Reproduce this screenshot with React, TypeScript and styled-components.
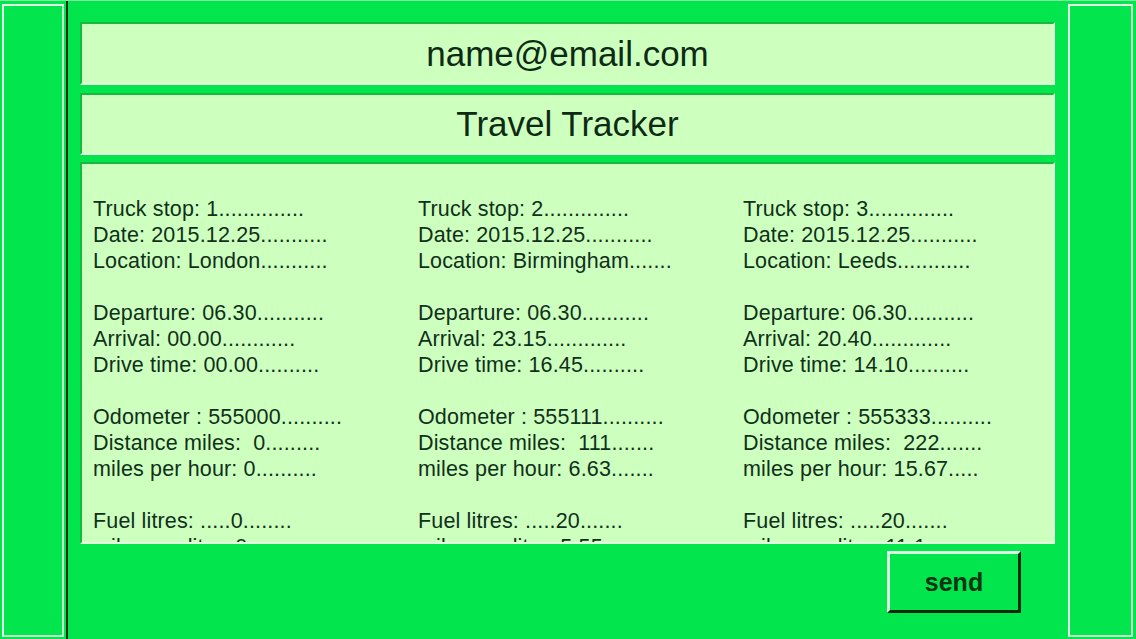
import { createGlobalStyle, styled } from 'styled-components';

const GlobalStyle = createGlobalStyle`
  html, body {
    margin: 0;
    padding: 0;
    background: #02e54c;
  }
  body {
    font-family: "Liberation Sans", Arial, sans-serif;
    color: #0f2a14;
  }
`;

type Stop = string[][];

const stops: Stop[] = [
  [
    ['Truck stop: 1..............', 'Date: 2015.12.25...........', 'Location: London...........'],
    ['Departure: 06.30...........', 'Arrival: 00.00............', 'Drive time: 00.00..........'],
    ['Odometer : 555000..........', 'Distance miles:  0.........', 'miles per hour: 0..........'],
    ['Fuel litres: .....0........', 'miles per litre: 0........'],
  ],
  [
    ['Truck stop: 2..............', 'Date: 2015.12.25...........', 'Location: Birmingham.......'],
    ['Departure: 06.30...........', 'Arrival: 23.15.............', 'Drive time: 16.45..........'],
    ['Odometer : 555111..........', 'Distance miles:  111.......', 'miles per hour: 6.63.......'],
    ['Fuel litres: .....20.......', 'miles per litre: 5.55......'],
  ],
  [
    ['Truck stop: 3..............', 'Date: 2015.12.25...........', 'Location: Leeds............'],
    ['Departure: 06.30...........', 'Arrival: 20.40.............', 'Drive time: 14.10..........'],
    ['Odometer : 555333..........', 'Distance miles:  222.......', 'miles per hour: 15.67.....'],
    ['Fuel litres: .....20.......', 'miles per litre: 11.1......'],
  ],
];

export default function App() {
  return (
    <>
      <GlobalStyle />
      <Screen>
        <SideBar $side="left">
          <SideFrame />
        </SideBar>
        <Main>
          <HeaderPanel $height={63}>name@email.com</HeaderPanel>
          <HeaderPanel $height={62}>Travel Tracker</HeaderPanel>
          <LogPanel>
            {stops.map((stop, i) => (
              <Column key={i}>
                {stop.map((group, j) => (
                  <Group key={j}>
                    {group.map((line, k) => (
                      <Line key={k}>{line}</Line>
                    ))}
                  </Group>
                ))}
              </Column>
            ))}
          </LogPanel>
          <Actions>
            <SendButton>send</SendButton>
          </Actions>
        </Main>
        <SideBar $side="right">
          <SideFrame />
        </SideBar>
      </Screen>
    </>
  );
}

const Screen = styled.div`
  display: flex;
  height: 639px;
  width: 1136px;
  overflow: hidden;
  border-top: 1px solid #7df29e;
  box-sizing: border-box;
`;

const SideBar = styled.div<{ $side: 'left' | 'right' }>`
  display: flex;
  flex-shrink: 0;
  box-sizing: border-box;
  width: 68px;
  padding: ${(p) => (p.$side === 'left' ? '3px 2px 2px 2px' : '3px 3px 2px 0')};
  border-right: ${(p) => (p.$side === 'left' ? '2px solid #0b2a10' : 'none')};
`;

const SideFrame = styled.div`
  flex: 1;
  border: 2px solid #e4ffe6;
  border-right-color: #bff5c8;
  border-bottom-color: #bff5c8;
`;

const Main = styled.div`
  flex: 1;
  min-width: 0;
  display: flex;
  flex-direction: column;
  padding: 21px 13px 0 12px;
  gap: 8px;
`;

const panelBorder = `
  box-sizing: border-box;
  background: #cdffbf;
  border: 2px solid #17b83f;
  border-right-color: #e6ffe0;
  border-bottom-color: #e6ffe0;
`;

const HeaderPanel = styled.div<{ $height: number }>`
  ${panelBorder}
  height: ${(p) => p.$height}px;
  display: flex;
  align-items: center;
  justify-content: center;
  font-size: 35px;
  color: #0f2a14;
`;

const LogPanel = styled.div`
  ${panelBorder}
  height: 382px;
  margin-top: -1px;
  display: grid;
  grid-template-columns: 325px 325px minmax(0, 1fr);
  padding: 32px 0 0 11px;
  overflow: hidden;
`;

const Column = styled.div`
  display: flex;
  flex-direction: column;
  gap: 26px;
  min-width: 0;
`;

const Group = styled.div`
  display: flex;
  flex-direction: column;
`;

const Line = styled.div`
  font-size: 21.5px;
  letter-spacing: 0.15px;
  line-height: 26px;
  white-space: pre;
  color: #10301a;
`;

const Actions = styled.div`
  display: flex;
  justify-content: flex-end;
  padding-right: 34px;
  margin-top: -1px;
`;

const SendButton = styled.button`
  width: 134px;
  height: 62px;
  box-sizing: border-box;
  background: #02e54c;
  border: 3px solid #d8ffe0;
  border-right-color: #0b2a10;
  border-bottom-color: #0b2a10;
  font-family: "Liberation Sans", Arial, sans-serif;
  font-weight: bold;
  font-size: 25px;
  color: #0c3314;
  padding: 0;
  cursor: pointer;
`;
